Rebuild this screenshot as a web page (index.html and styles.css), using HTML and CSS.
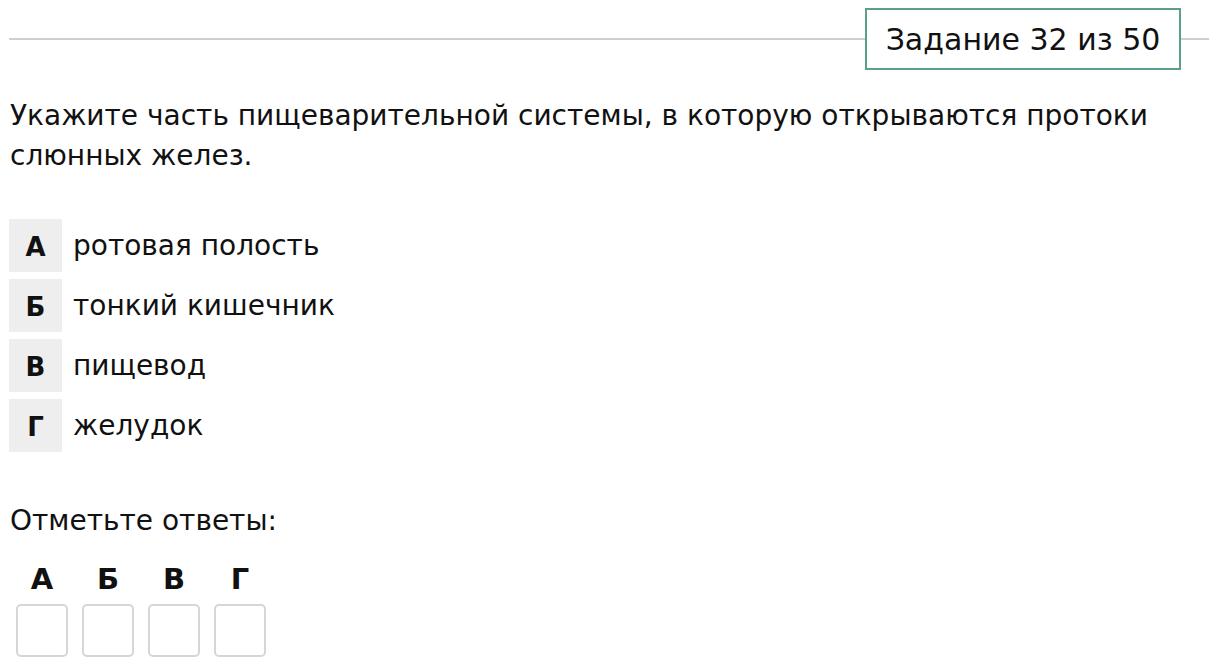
FILE: index.html
```html
<!DOCTYPE html>
<html lang="ru">

<head>
	<meta charset="UTF-8">
	<title>Задание 32 из 50</title>
	<link rel="stylesheet" href="styles.css">
</head>

<body>
	<div class="task-header">
		<div class="rule"></div>
		<div class="task-number">Задание 32 из 50</div>
		<div class="rule rule-tail"></div>
	</div>

	<p class="question">Укажите часть пищеварительной системы, в которую открываются протоки слюнных желез.</p>

	<div class="options">
		<div class="option"><span class="option-letter">А</span><span class="option-text">ротовая полость</span></div>
		<div class="option"><span class="option-letter">Б</span><span class="option-text">тонкий кишечник</span></div>
		<div class="option"><span class="option-letter">В</span><span class="option-text">пищевод</span></div>
		<div class="option"><span class="option-letter">Г</span><span class="option-text">желудок</span></div>
	</div>

	<p class="answer-title">Отметьте ответы:</p>

	<div class="answers">
		<label class="answer"><span class="answer-letter">А</span><span class="answer-box"></span></label>
		<label class="answer"><span class="answer-letter">Б</span><span class="answer-box"></span></label>
		<label class="answer"><span class="answer-letter">В</span><span class="answer-box"></span></label>
		<label class="answer"><span class="answer-letter">Г</span><span class="answer-box"></span></label>
	</div>
</body>

</html>
```

FILE: styles.css
```css
body {
	margin: 0;
	padding: 8px 0 0 9px;
	font-family: "DejaVu Sans", sans-serif;
	color: #111;
	background: #fff;
}

.task-header {
	display: flex;
	align-items: center;
}
.rule {
	flex: 1;
	height: 2px;
	background: #cfcfcf;
}
.rule-tail {
	flex: 0 0 28px;
}
.task-number {
	width: 312px;
	height: 58px;
	border: 2px solid #5c9e8d;
	display: flex;
	align-items: center;
	justify-content: center;
	font-size: 30px;
}

.question {
	margin: 26px 0 0 1px;
	font-size: 28px;
	line-height: 40px;
	max-width: 1180px;
}

.options {
	margin-top: 43px;
	display: flex;
	flex-direction: column;
	gap: 7px;
}
.option {
	display: flex;
	align-items: center;
	gap: 11px;
}
.option-letter {
	width: 53px;
	height: 53px;
	background: #eeeeee;
	display: flex;
	align-items: center;
	justify-content: center;
	font-weight: bold;
	font-size: 26px;
	padding-top: 3px;
	box-sizing: border-box;
}
.option-text {
	font-size: 28px;
}

.answer-title {
	margin: 49px 0 0 1px;
	font-size: 28px;
	line-height: 40px;
}

.answers {
	display: flex;
	gap: 14px;
	margin: 22px 0 0 7px;
}
.answer {
	display: flex;
	flex-direction: column;
	align-items: center;
	gap: 9px;
}
.answer-letter {
	font-weight: bold;
	font-size: 29px;
	line-height: 32px;
}
.answer-box {
	width: 48px;
	height: 49px;
	border: 2px solid #d6d6d6;
	border-radius: 5px;
}
```
